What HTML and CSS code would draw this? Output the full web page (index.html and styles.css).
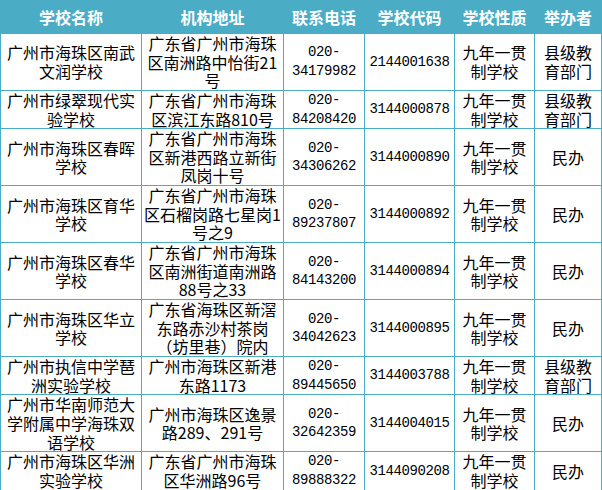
FILE: index.html
```html
<!DOCTYPE html>
<html lang="zh-CN">
<head>
<meta charset="utf-8">
<title>学校列表</title>
<link rel="stylesheet" href="styles.css">
</head>
<body>
<table class="schools">
  <colgroup>
    <col class="c-name">
    <col class="c-addr">
    <col class="c-phone">
    <col class="c-code">
    <col class="c-type">
    <col class="c-org">
  </colgroup>
  <thead>
    <tr class="head">
      <th>学校名称</th><th>机构地址</th><th>联系电话</th><th>学校代码</th><th>学校性质</th><th>举办者</th>
    </tr>
  </thead>
  <tbody>
    <tr class="r3">
      <td>广州市海珠区南武<br>文润学校</td>
      <td>广东省广州市海珠<br>区南洲路中怡街21<br>号</td>
      <td class="num">020-<br>34179982</td>
      <td class="num">2144001638</td>
      <td>九年一贯<br>制学校</td>
      <td>县级教<br>育部门</td>
    </tr>
    <tr class="r2">
      <td>广州市绿翠现代实<br>验学校</td>
      <td>广东省广州市海珠<br>区滨江东路810号</td>
      <td class="num">020-<br>84208420</td>
      <td class="num">3144000878</td>
      <td>九年一贯<br>制学校</td>
      <td>县级教<br>育部门</td>
    </tr>
    <tr class="r3">
      <td>广州市海珠区春晖<br>学校</td>
      <td>广东省广州市海珠<br>区新港西路立新街<br>凤岗十号</td>
      <td class="num">020-<br>34306262</td>
      <td class="num">3144000890</td>
      <td>九年一贯<br>制学校</td>
      <td>民办</td>
    </tr>
    <tr class="r3">
      <td>广州市海珠区育华<br>学校</td>
      <td>广东省广州市海珠<br>区石榴岗路七星岗1<br>号之9</td>
      <td class="num">020-<br>89237807</td>
      <td class="num">3144000892</td>
      <td>九年一贯<br>制学校</td>
      <td>民办</td>
    </tr>
    <tr class="r3">
      <td>广州市海珠区春华<br>学校</td>
      <td>广东省广州市海珠<br>区南洲街道南洲路<br>88号之33</td>
      <td class="num">020-<br>84143200</td>
      <td class="num">3144000894</td>
      <td>九年一贯<br>制学校</td>
      <td>民办</td>
    </tr>
    <tr class="r3">
      <td>广州市海珠区华立<br>学校</td>
      <td>广东省海珠区新滘<br>东路赤沙村茶岗<br>（坊里巷）院内</td>
      <td class="num">020-<br>34042623</td>
      <td class="num">3144000895</td>
      <td>九年一贯<br>制学校</td>
      <td>民办</td>
    </tr>
    <tr class="r2">
      <td>广州市执信中学琶<br>洲实验学校</td>
      <td>广州市海珠区新港<br>东路1173</td>
      <td class="num">020-<br>89445650</td>
      <td class="num">3144003788</td>
      <td>九年一贯<br>制学校</td>
      <td>县级教<br>育部门</td>
    </tr>
    <tr class="r3">
      <td>广州市华南师范大<br>学附属中学海珠双<br>语学校</td>
      <td>广州市海珠区逸景<br>路289、291号</td>
      <td class="num">020-<br>32642359</td>
      <td class="num">3144004015</td>
      <td>九年一贯<br>制学校</td>
      <td>民办</td>
    </tr>
    <tr class="r2">
      <td>广州市海珠区华洲<br>实验学校</td>
      <td>广东省广州市海珠<br>区华洲路96号</td>
      <td class="num">020-<br>89888322</td>
      <td class="num">3144090208</td>
      <td>九年一贯<br>制学校</td>
      <td>民办</td>
    </tr>
  </tbody>
</table>
</body>
</html>
```
FILE: styles.css
```css
html, body {
  margin: 0;
  padding: 0;
  background: #ffffff;
}

.schools {
  border-collapse: collapse;
  table-layout: fixed;
  width: 601px;
  font-family: "Noto Sans CJK SC", "Noto Sans", sans-serif;
  font-size: 16px;
  color: #000000;
}

.c-name { width: 141px; }
.c-addr { width: 142px; }
.c-phone { width: 81px; }
.c-code { width: 90px; }
.c-type { width: 80px; }
.c-org { width: 67px; }

.schools th,
.schools td {
  border: 1px solid #4bacc6;
  padding: 0;
  text-align: center;
  vertical-align: middle;
  white-space: nowrap;
  overflow: hidden;
}

.schools th {
  background: #4bacc6;
  color: #ffffff;
  font-weight: bold;
  line-height: 20px;
}

.schools td {
  line-height: 18.6px;
}

.head { height: 33px; }
.r3 { height: 57px; }
.r2 { height: 38px; }

.schools td.num {
  font-family: "Liberation Mono", "DejaVu Sans Mono", monospace;
  font-size: 14px;
  letter-spacing: -0.4px;
}
```
